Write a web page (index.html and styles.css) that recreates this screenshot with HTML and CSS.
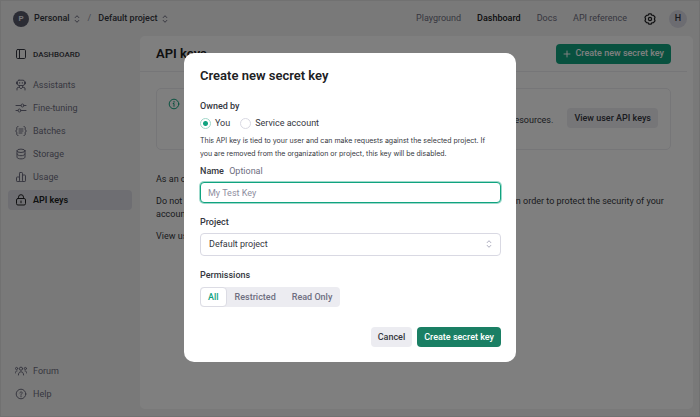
FILE: index.html
```html
<!DOCTYPE html>
<html lang="en">
<head>
<meta charset="utf-8">
<meta name="viewport" content="width=device-width, initial-scale=1">
<title>API keys</title>
<link rel="stylesheet" href="styles.css">
</head>
<body>
<svg class="sprite" aria-hidden="true">
  <symbol id="chevrons" viewBox="0 0 8 10"><path d="M2.200 3.600 4 1.700l1.800 1.900M2.200 6.400 4 8.300l1.800-1.900"/></symbol>
</svg>
<div class="app">
  <header class="topbar">
    <div class="crumbs">
      <span class="avatar avatar-org">P</span>
      <button class="crumb" type="button">Personal <svg class="chev"><use href="#chevrons"/></svg></button>
      <span class="slash">/</span>
      <button class="crumb" type="button">Default project <svg class="chev"><use href="#chevrons"/></svg></button>
    </div>
    <nav class="topnav">
      <a href="#">Playground</a>
      <a href="#" class="current">Dashboard</a>
      <a href="#">Docs</a>
      <a href="#">API reference</a>
      <button class="gear" type="button" aria-label="Settings">
        <svg viewBox="0 0 14 14"><path d="M5.900 1.800h2.200l.7 1.400 1.700.1 1.500 1.900-.6 1.800.6 1.800-1.500 1.900-1.700.1-.7 1.400H5.900l-.7-1.400-1.700-.1L2 8.800 2.600 7 2 5.200l1.500-1.900 1.700-.1z"/><circle cx="7" cy="7" r="1.600"/></svg>
      </button>
      <span class="avatar avatar-user">H</span>
    </nav>
  </header>
  <div class="body">
    <aside class="sidebar">
      <div class="side-title">
        <svg viewBox="0 0 12 12"><rect x="1.500" y="1.500" width="9" height="9" rx="1.200"/><path d="M4.500 1.500v9"/></svg>
        Dashboard
      </div>
      <nav class="side-nav">
        <a href="#"><svg viewBox="0 0 12 12"><rect x="2.500" y="1.200" width="7" height="5.300" rx="1.500"/><path d="M1.500 3v1.800M10.500 3v1.800M4.700 3.500v.8M7.300 3.500v.8M4.500 6.500v1.300L2 9v2M7.500 6.500v1.300L10 9v2M4.300 8.300 6 9.800l1.700-1.500"/></svg>Assistants</a>
        <a href="#"><svg viewBox="0 0 12 12"><path d="M1 3.500h5M9 3.500h2M1 8.500h2M6 8.500h5"/><circle cx="7.500" cy="3.500" r="1.500"/><circle cx="4.500" cy="8.500" r="1.500"/></svg>Fine-tuning</a>
        <a href="#"><svg viewBox="0 0 12 12"><path d="M3 1.500c-1.500 0-1.200 1-1.200 2.500S1.500 5.500.5 6c1 .5 1.300.5 1.300 2s-.3 2.500 1.200 2.500M9 1.500c1.500 0 1.200 1 1.200 2.500s.3 1.500 1.300 2c-1 .5-1.300.5-1.300 2s.3 2.500-1.200 2.500M4 4h4M4 6h4M4 8h3"/></svg>Batches</a>
        <a href="#"><svg viewBox="0 0 12 12"><ellipse cx="6" cy="2.800" rx="4" ry="1.700"/><path d="M2 2.800v6.400c0 .9 1.800 1.700 4 1.700s4-.8 4-1.700V2.800M2 6c0 .9 1.800 1.700 4 1.700S10 6.900 10 6"/></svg>Storage</a>
        <a href="#"><svg viewBox="0 0 12 12"><path d="M4.500 10.500H2.200a.7.700 0 0 1-.7-.7V6.700a.7.700 0 0 1 .7-.7h2.300M7.500 4h2.300a.7.700 0 0 1 .7.700v5.100a.7.700 0 0 1-.7.700H7.500"/><rect x="4.500" y="1.500" width="3" height="9" rx=".7"/></svg>Usage</a>
        <a href="#" class="active"><svg viewBox="0 0 12 12"><rect x="1.500" y="4.500" width="9" height="6.500" rx="1.400"/><path d="M3.500 4.500V3.200a2.500 2.500 0 0 1 5 0v1.300M6 7v1.800"/></svg>API keys</a>
      </nav>
      <nav class="side-nav side-foot">
        <a href="#"><svg viewBox="0 0 12 12"><circle cx="6" cy="3.700" r="1.600"/><circle cx="1.600" cy="3.500" r="1.100"/><circle cx="10.400" cy="3.500" r="1.100"/><path d="M3.400 10c0-2 1-3.200 2.600-3.200S8.600 8 8.600 10M.3 8c0-1.300.6-2.100 1.700-2.100M11.700 8c0-1.300-.6-2.100-1.700-2.100"/></svg>Forum</a>
        <a href="#"><svg viewBox="0 0 12 12"><circle cx="6" cy="6" r="4.800"/><path d="M4.900 5c0-1.500 2.300-1.500 2.300-.1C7.200 5.800 6 5.800 6 6.900M6 8v.8"/></svg>Help</a>
      </nav>
    </aside>
    <main class="panel">
      <div class="panel-head">
        <h1>API keys</h1>
        <button class="btn btn-green" type="button"><svg viewBox="0 0 8 8"><path d="M4 1v6M1 4h6"/></svg>Create new secret key</button>
      </div>
      <section class="notice">
        <svg class="info" viewBox="0 0 12 12"><circle cx="6" cy="6" r="4.800"/><path d="M5.200 5.500H6v2.800M6 3.400v.9"/></svg>
        <div class="notice-text">
          <strong>Project API keys have replaced user API keys.</strong>
          <p>We recommend using project based API keys for more granular control over your resources.</p>
        </div>
        <button class="btn btn-gray" type="button">View user API keys</button>
      </section>
      <div class="copy">
        <p>As an owner of this project, you can view and manage all API keys in this project.</p>
        <p>Do not share your API key with others or expose it in the browser or other client-side code in order to protect the security of your account.</p>
        <p>View usage per API key.</p>
      </div>
    </main>
  </div>
</div>
<div class="overlay">
  <form class="modal" role="dialog" aria-labelledby="dialog-title">
    <h2 id="dialog-title">Create new secret key</h2>
    <fieldset>
      <legend>Owned by</legend>
      <div class="radios">
        <label><input type="radio" name="owner" checked>You</label>
        <label><input type="radio" name="owner">Service account</label>
      </div>
      <p class="hint">This API key is tied to your user and can make requests against the selected project. If<br>you are removed from the organization or project, this key will be disabled.</p>
    </fieldset>
    <div class="field field-name">
      <label for="key-name">Name <span class="optional">Optional</span></label>
      <input id="key-name" type="text" placeholder="My Test Key">
    </div>
    <div class="field field-project">
      <label for="project">Project</label>
      <div class="select">
        <select id="project"><option>Default project</option></select>
        <svg class="chev"><use href="#chevrons"/></svg>
      </div>
    </div>
    <div class="field field-perms">
      <span class="label" id="perm-label">Permissions</span>
      <div class="segments" role="group" aria-labelledby="perm-label">
        <button type="button" class="selected" aria-pressed="true">All</button>
        <button type="button" aria-pressed="false">Restricted</button>
        <button type="button" aria-pressed="false">Read Only</button>
      </div>
    </div>
    <div class="actions">
      <button class="btn btn-gray" type="button">Cancel</button>
      <button class="btn btn-submit" type="submit">Create secret key</button>
    </div>
  </form>
</div>
</body>
</html>
```
FILE: styles.css
```css
* { box-sizing: border-box; }
body {
  margin: 0;
  font: 9px/13px Roboto, "Liberation Sans", sans-serif;
  color: #353740;
}
h1, h2, p, fieldset, legend { margin: 0; padding: 0; border: 0; }
button, input, select { font: inherit; color: inherit; }
button { border: 0; padding: 0; background: none; white-space: nowrap; }
a { color: inherit; text-decoration: none; }
svg { fill: none; stroke: currentColor; stroke-linecap: round; stroke-linejoin: round; flex: none; }
.sprite { display: none; }
.chev { width: 8px; height: 10px; color: #6e6e80; }

.app {
  display: flex;
  flex-direction: column;
  min-height: 100vh;
  background: #f3f3f3;
  border: 1px solid #e2e2e2;
}
.topbar {
  display: flex;
  align-items: center;
  justify-content: space-between;
  height: 35px;
  padding: 0 12px;
}
.crumbs, .topnav { display: flex; align-items: center; }
.avatar {
  display: flex;
  align-items: center;
  justify-content: center;
  border-radius: 50%;
}
.avatar-org { width: 16px; height: 16px; margin-right: 5px; background: #565869; color: #ececf1; font-size: 8px; font-weight: 600; }
.avatar-user { width: 18px; height: 18px; margin-left: -4px; background: #d9d9e3; color: #353740; font-weight: 500; }
.crumb { display: flex; align-items: center; gap: 3px; font-weight: 500; }
.slash { margin: 0 7px; color: #8e8ea0; }
.topnav { gap: 16px; color: #6e6e80; }
.topnav .current { color: #202123; font-weight: 500; }
.gear { display: flex; color: #202123; }
.gear svg { width: 14px; height: 14px; stroke-width: 1.2; }

.body { display: flex; flex: 1; padding: 0 6px 7px 7px; }
.sidebar {
  display: flex;
  flex-direction: column;
  width: 132px;
  padding-right: 8px;
  color: #6e6e80;
}
.sidebar svg { width: 12px; height: 12px; }
.side-title {
  display: flex;
  align-items: center;
  gap: 6px;
  height: 36px;
  margin-bottom: 3px;
  padding-left: 7px;
  font-size: 8px;
  font-weight: 500;
  text-transform: uppercase;
  color: #353740;
}
.side-nav { display: flex; flex-direction: column; gap: 3px; }
.side-nav a {
  display: flex;
  align-items: center;
  gap: 6px;
  height: 20px;
  padding-left: 7px;
  border-radius: 4px;
}
.side-nav .active { background: #dcdce4; color: #202123; font-weight: 600; }
.side-foot { margin-top: auto; padding-bottom: 5px; }

.panel { flex: 1; min-width: 0; background: #fff; border-radius: 5px; }
.panel-head {
  display: flex;
  align-items: center;
  justify-content: space-between;
  height: 36px;
  margin-right: 6px;
  padding: 0 16px;
  border-bottom: 1px solid #ececf1;
}
h1, h2 { font-size: 13px; line-height: 18px; font-weight: 600; color: #202123; }
.btn {
  display: flex;
  align-items: center;
  justify-content: center;
  height: 20px;
  padding: 0 7px;
  border-radius: 4px;
  font-weight: 500;
}
.btn-green { gap: 4px; background: #10a37f; color: #fff; }
.btn-green svg { width: 8px; height: 8px; }
.btn-gray { background: #ececf1; color: #353740; }
.btn-submit { background: #1a7f64; color: #fff; }
.notice {
  display: flex;
  gap: 8px;
  margin: 16px 22px 0 16px;
  padding: 9px 12px 21px 11px;
  border: 1px solid #ececf1;
  border-radius: 5px;
}
.info { width: 12px; height: 12px; color: #10a37f; }
.notice-text { flex: 1; display: flex; flex-direction: column; gap: 3px; min-width: 0; white-space: nowrap; }
.notice .btn { margin-top: 10px; }
.copy { display: flex; flex-direction: column; gap: 9px; margin: 23px 22px 0 16px; }

.overlay {
  position: fixed;
  inset: 0;
  display: flex;
  align-items: center;
  justify-content: center;
  padding-bottom: 2px;
  background: rgba(0, 0, 0, .5);
}
.modal {
  width: 100%;
  max-width: 332px;
  padding: 14px 15px 15px 16px;
  background: #fff;
  border-radius: 10px;
}
fieldset { margin-top: 15px; min-width: 0; }
legend, .field > label, .label { display: block; font-weight: 500; }
.radios { display: flex; gap: 10px; margin-top: 4px; }
.radios label { display: flex; align-items: center; gap: 4px; }
.radios input {
  appearance: none;
  width: 11px;
  height: 11px;
  margin: 0;
  border: 1px solid #d9d9e3;
  border-radius: 50%;
}
.radios input:checked {
  border-color: #9fd6c8;
  background: radial-gradient(circle, #10a37f 2px, #fff 3px);
}
.hint { margin-top: 4px; font-family: Inter, "Liberation Sans", sans-serif; font-size: 7px; }
.field-name { margin-top: 5px; }
.field-project { margin-top: 13px; }
.field-perms { margin-top: 13px; }
.optional { margin-left: 3px; color: #6e6e80; font-weight: 400; }
.field input, .select select {
  display: block;
  width: 100%;
  padding: 0 8px;
  background: #fff;
  border-radius: 4px;
  outline: 0;
}
.field input {
  height: 21px;
  margin-top: 4px;
  border: 1px solid #10a37f;
  box-shadow: 0 0 0 1px rgba(16, 163, 127, .4);
}
.field input { padding: 0 7px; }
.field input::placeholder { color: #8e8ea0; opacity: 1; }
.select { position: relative; margin-top: 4px; }
.select select { appearance: none; height: 23px; border: 1px solid #d9d9e3; }
.select .chev { position: absolute; top: 6px; right: 8px; color: #acacbe; }
.segments {
  display: flex;
  width: fit-content;
  height: 20px;
  margin-top: 5px;
  background: #ececf1;
  border-radius: 4px;
  color: #6e6e80;
}
.segments button { padding: 0 8px; border-radius: 4px; font-weight: 500; }
.segments .selected { padding: 0 7px; background: #fff; color: #10a37f; border: 1px solid #dcdce4; }
.actions { display: flex; justify-content: flex-end; gap: 5px; margin-top: 20px; }
```
